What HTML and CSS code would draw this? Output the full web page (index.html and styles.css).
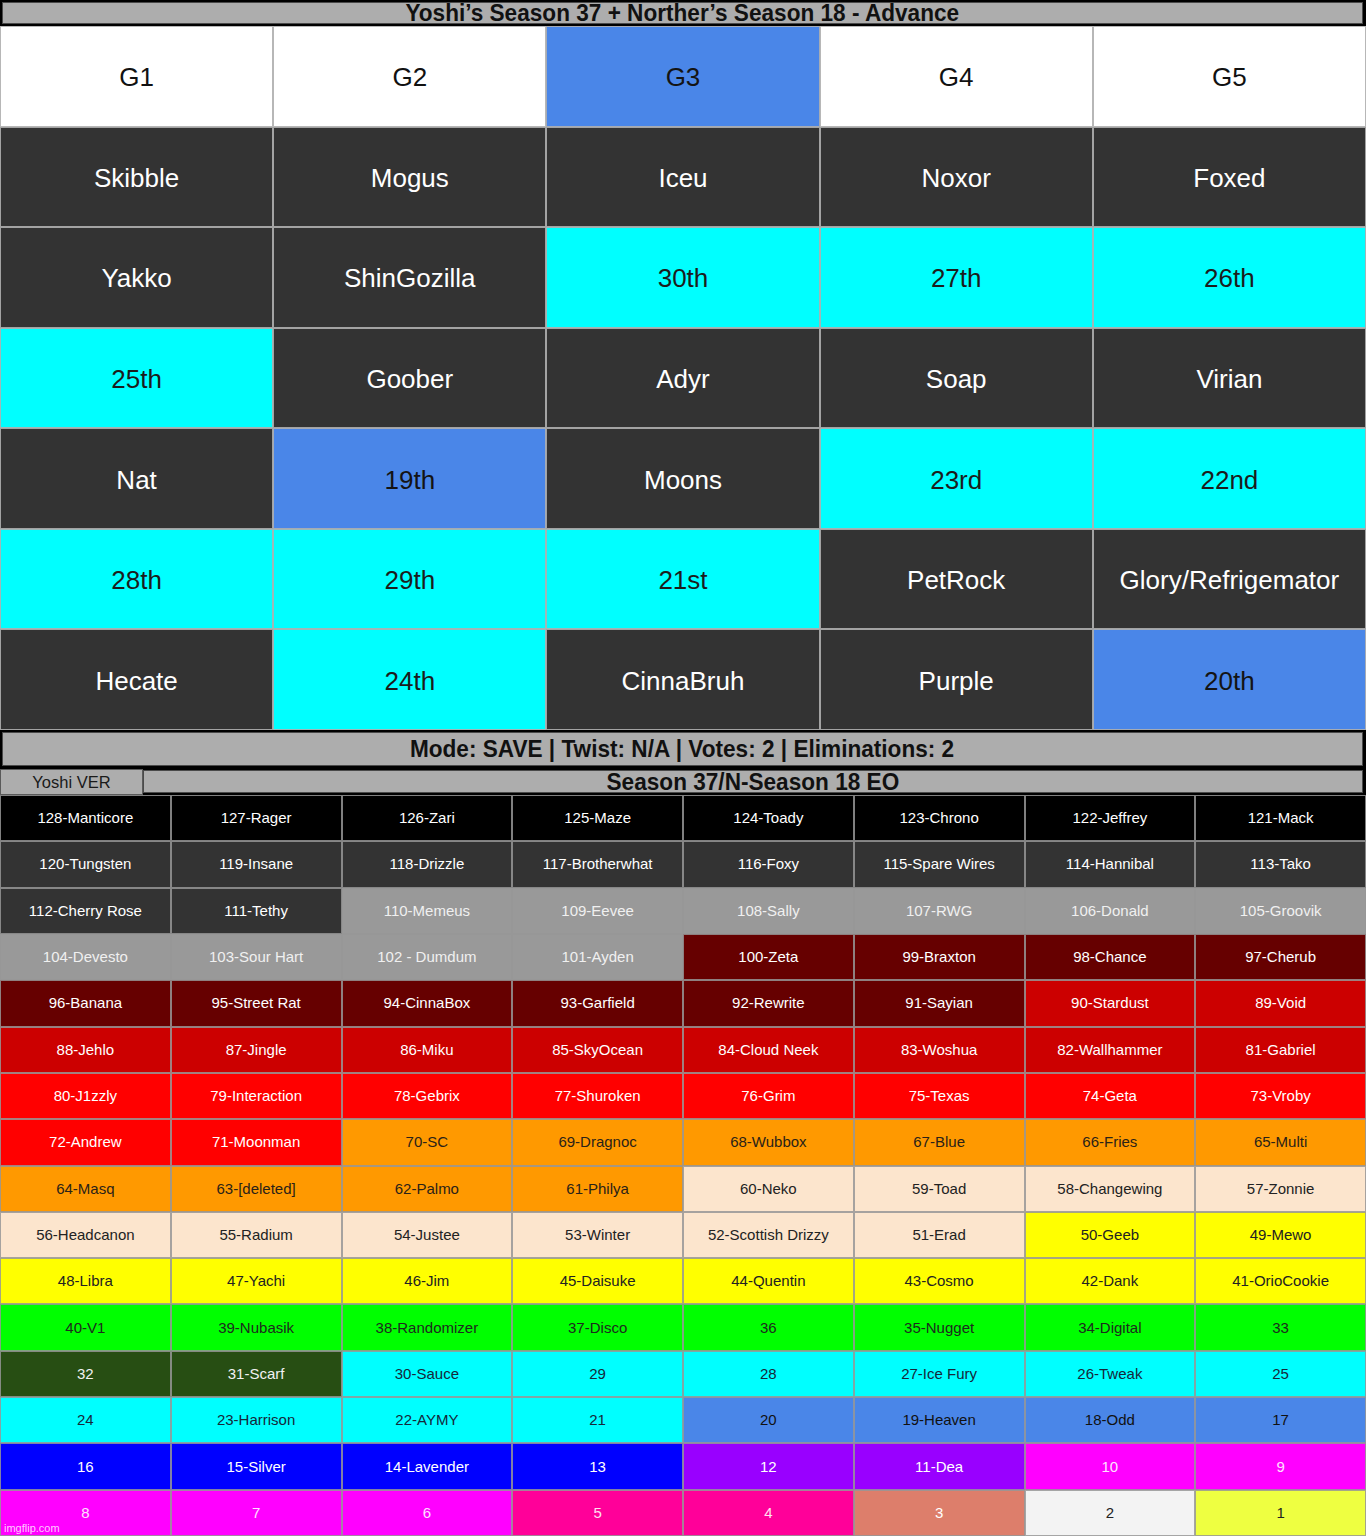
FILE: index.html
```html
<!DOCTYPE html>
<html>
<head>
<meta charset="utf-8">
<link rel="stylesheet" href="styles.css">
</head>
<body>
<div class="page">
  <div class="bar-wrap title-wrap">
    <div class="bar"><span class="bold-text">Yoshi’s Season 37 + Norther’s Season 18 - Advance</span></div>
  </div>

  <div class="groups">
    <div class="g white">G1</div><div class="g white">G2</div><div class="g blue">G3</div><div class="g white">G4</div><div class="g white">G5</div>
    <div class="g dark">Skibble</div><div class="g dark">Mogus</div><div class="g dark">Iceu</div><div class="g dark">Noxor</div><div class="g dark">Foxed</div>
    <div class="g dark">Yakko</div><div class="g dark">ShinGozilla</div><div class="g cyan">30th</div><div class="g cyan">27th</div><div class="g cyan">26th</div>
    <div class="g cyan">25th</div><div class="g dark">Goober</div><div class="g dark">Adyr</div><div class="g dark">Soap</div><div class="g dark">Virian</div>
    <div class="g dark">Nat</div><div class="g blue">19th</div><div class="g dark">Moons</div><div class="g cyan">23rd</div><div class="g cyan">22nd</div>
    <div class="g cyan">28th</div><div class="g cyan">29th</div><div class="g cyan">21st</div><div class="g dark">PetRock</div><div class="g dark">Glory/Refrigemator</div>
    <div class="g dark">Hecate</div><div class="g cyan">24th</div><div class="g dark">CinnaBruh</div><div class="g dark">Purple</div><div class="g blue">20th</div>
  </div>

  <div class="bar-wrap mode-wrap">
    <div class="bar"><span class="bold-text">Mode: SAVE | Twist: N/A | Votes: 2 | Eliminations: 2</span></div>
  </div>

  <div class="eo-row">
    <div class="ver">Yoshi VER</div>
    <div class="bar eo"><span class="bold-text">Season 37/N-Season 18 EO</span></div>
  </div>

  <div class="eo-table">
    <div class="c k">128-Manticore</div><div class="c k">127-Rager</div><div class="c k">126-Zari</div><div class="c k">125-Maze</div><div class="c k">124-Toady</div><div class="c k">123-Chrono</div><div class="c k">122-Jeffrey</div><div class="c k">121-Mack</div>
    <div class="c d">120-Tungsten</div><div class="c d">119-Insane</div><div class="c d">118-Drizzle</div><div class="c d">117-Brotherwhat</div><div class="c d">116-Foxy</div><div class="c d">115-Spare Wires</div><div class="c d">114-Hannibal</div><div class="c d">113-Tako</div>
    <div class="c d">112-Cherry Rose</div><div class="c d">111-Tethy</div><div class="c gr">110-Memeus</div><div class="c gr">109-Eevee</div><div class="c gr">108-Sally</div><div class="c gr">107-RWG</div><div class="c gr">106-Donald</div><div class="c gr">105-Groovik</div>
    <div class="c gr">104-Devesto</div><div class="c gr">103-Sour Hart</div><div class="c gr">102 - Dumdum</div><div class="c gr">101-Ayden</div><div class="c dr">100-Zeta</div><div class="c dr">99-Braxton</div><div class="c dr">98-Chance</div><div class="c dr">97-Cherub</div>
    <div class="c dr">96-Banana</div><div class="c dr">95-Street Rat</div><div class="c dr">94-CinnaBox</div><div class="c dr">93-Garfield</div><div class="c dr">92-Rewrite</div><div class="c dr">91-Sayian</div><div class="c r1">90-Stardust</div><div class="c r1">89-Void</div>
    <div class="c r1">88-Jehlo</div><div class="c r1">87-Jingle</div><div class="c r1">86-Miku</div><div class="c r1">85-SkyOcean</div><div class="c r1">84-Cloud Neek</div><div class="c r1">83-Woshua</div><div class="c r1">82-Wallhammer</div><div class="c r1">81-Gabriel</div>
    <div class="c r2">80-J1zzly</div><div class="c r2">79-Interaction</div><div class="c r2">78-Gebrix</div><div class="c r2">77-Shuroken</div><div class="c r2">76-Grim</div><div class="c r2">75-Texas</div><div class="c r2">74-Geta</div><div class="c r2">73-Vroby</div>
    <div class="c r2">72-Andrew</div><div class="c r2">71-Moonman</div><div class="c or">70-SC</div><div class="c or">69-Dragnoc</div><div class="c or">68-Wubbox</div><div class="c or">67-Blue</div><div class="c or">66-Fries</div><div class="c or">65-Multi</div>
    <div class="c or">64-Masq</div><div class="c or">63-[deleted]</div><div class="c or">62-Palmo</div><div class="c or">61-Philya</div><div class="c pe">60-Neko</div><div class="c pe">59-Toad</div><div class="c pe">58-Changewing</div><div class="c pe">57-Zonnie</div>
    <div class="c pe">56-Headcanon</div><div class="c pe">55-Radium</div><div class="c pe">54-Justee</div><div class="c pe">53-Winter</div><div class="c pe">52-Scottish Drizzy</div><div class="c pe">51-Erad</div><div class="c ye">50-Geeb</div><div class="c ye">49-Mewo</div>
    <div class="c ye">48-Libra</div><div class="c ye">47-Yachi</div><div class="c ye">46-Jim</div><div class="c ye">45-Daisuke</div><div class="c ye">44-Quentin</div><div class="c ye">43-Cosmo</div><div class="c ye">42-Dank</div><div class="c ye">41-OrioCookie</div>
    <div class="c gn">40-V1</div><div class="c gn">39-Nubasik</div><div class="c gn">38-Randomizer</div><div class="c gn">37-Disco</div><div class="c gn">36</div><div class="c gn">35-Nugget</div><div class="c gn">34-Digital</div><div class="c gn">33</div>
    <div class="c dg">32</div><div class="c dg">31-Scarf</div><div class="c cy">30-Sauce</div><div class="c cy">29</div><div class="c cy">28</div><div class="c cy">27-Ice Fury</div><div class="c cy">26-Tweak</div><div class="c cy">25</div>
    <div class="c cy">24</div><div class="c cy">23-Harrison</div><div class="c cy">22-AYMY</div><div class="c cy">21</div><div class="c lb">20</div><div class="c lb">19-Heaven</div><div class="c lb">18-Odd</div><div class="c lb">17</div>
    <div class="c bl">16</div><div class="c bl">15-Silver</div><div class="c bl">14-Lavender</div><div class="c bl">13</div><div class="c pu">12</div><div class="c pu">11-Dea</div><div class="c mg">10</div><div class="c mg">9</div>
    <div class="c mg">8</div><div class="c mg">7</div><div class="c mg">6</div><div class="c pk">5</div><div class="c pk">4</div><div class="c sa">3</div><div class="c lg">2</div><div class="c ly">1</div>
  </div>

  <div class="watermark">imgflip.com</div>
</div>
</body>
</html>
```

FILE: styles.css
```css
* { box-sizing: border-box; }

html, body {
  margin: 0;
  padding: 0;
  background: #000;
}

.page {
  position: relative;
  width: 1366px;
  height: 1536px;
  overflow: hidden;
  font-family: "Liberation Sans", Arial, sans-serif;
  background: #000;
}

.bar-wrap {
  background: #000;
}

.title-wrap {
  height: 26px;
  padding: 2px 3px 2px 2px;
}

.mode-wrap {
  height: 39px;
  padding: 2px 3px 3px 2px;
}

.bar {
  height: 100%;
  background: #adadad;
  border: 1px solid #4a4a4a;
  display: flex;
  align-items: center;
  justify-content: center;
}

.bold-text {
  display: inline-block;
  font-weight: bold;
  font-size: 25px;
  line-height: 22px;
  color: #111;
  transform: scale(0.904, 0.92);
  white-space: nowrap;
}

.groups {
  height: 704px;
  display: grid;
  grid-template-columns: repeat(5, 1fr);
  grid-template-rows: repeat(7, 1fr);
}

.g {
  display: flex;
  align-items: center;
  justify-content: center;
  padding-top: 3px;
  font-size: 26px;
  box-shadow: inset 0 0 0 1px rgba(175, 175, 175, 0.9);
}

.g.white { background: #fff; color: #111; }
.g.blue { background: #4a86e8; color: #141414; }
.g.dark { background: #333; color: #fff; }
.g.cyan { background: #00ffff; color: #1c1c1c; }

.eo-row {
  height: 26px;
  display: flex;
  background: #000;
}

.ver {
  width: 143px;
  background: #adadad;
  border: 1px solid #5a5a5a;
  display: flex;
  align-items: center;
  justify-content: center;
  font-size: 16.5px;
  color: #1a1a1a;
}

.bar.eo {
  flex: 1;
  height: auto;
  margin: 1px 3px 2px 0;
}

.eo-table {
  height: 741px;
  display: grid;
  grid-template-columns: repeat(8, 1fr);
  grid-template-rows: repeat(16, 1fr);
}

.c {
  display: flex;
  align-items: center;
  justify-content: center;
  padding-bottom: 1px;
  font-size: 15px;
  white-space: nowrap;
  box-shadow: inset 0 0 0 1px rgba(150, 150, 150, 0.85);
}

.c.k { background: #000; color: #fff; }
.c.d { background: #333; color: #fff; }
.c.gr { background: #999; color: #f0f0f0; }
.c.dr { background: #660000; color: #fff; }
.c.r1 { background: #cc0000; color: #fff; }
.c.r2 { background: #ff0000; color: #fff; }
.c.or { background: #ff9900; color: #2a2218; }
.c.pe { background: #fce5cd; color: #222; }
.c.ye { background: #ffff00; color: #222; }
.c.gn { background: #00ff00; color: #1e2a1e; }
.c.dg { background: #274e13; color: #f2f2f2; }
.c.cy { background: #00ffff; color: #16283a; }
.c.lb { background: #4a86e8; color: #111; }
.c.bl { background: #0000ff; color: #fff; }
.c.pu { background: #9900ff; color: #fff; }
.c.mg { background: #ff00ff; color: #ffe0ff; }
.c.pk { background: #ff0099; color: #ffe0f0; }
.c.sa { background: #dd7e6b; color: #fff; }
.c.lg { background: #f3f3f3; color: #222; }
.c.ly { background: #eeff41; color: #222; }

.watermark {
  position: absolute;
  left: 4px;
  bottom: 2px;
  font-size: 11px;
  color: rgba(255, 255, 255, 0.8);
}
```
